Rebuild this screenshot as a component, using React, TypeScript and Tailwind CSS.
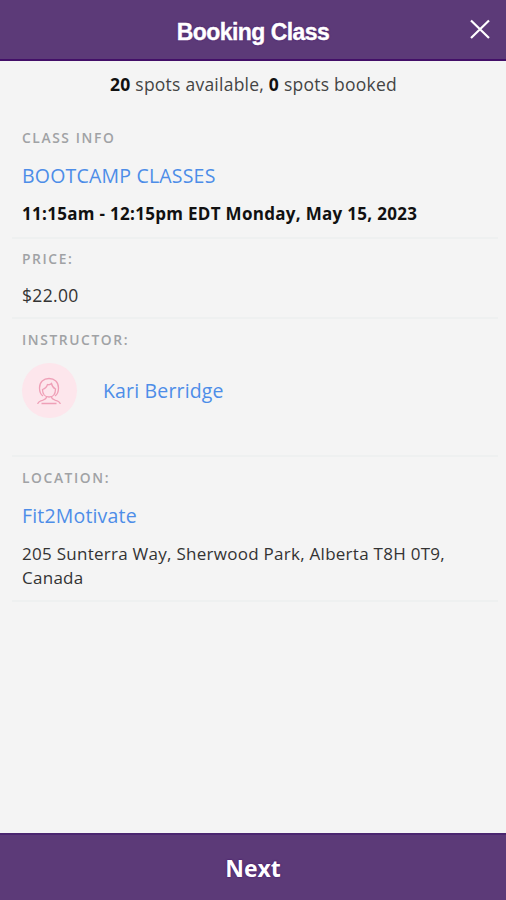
import type { ReactNode } from 'react';

const Label = ({ children }: { children: ReactNode }) => (
  <h2 className="text-[13.8px] font-semibold leading-5 tracking-[1.6px] text-[#a0a2a5]">{children}</h2>
);

const App = () => {
  return (
    <div className="flex flex-col h-[900px] w-[506px] bg-[#f4f4f4] text-[#333] font-['Open_Sans',sans-serif]">
      <header className="relative flex h-[61px] shrink-0 items-center justify-center border-b-2 border-[#430f68] bg-[#5c3a78] pt-[6px] text-white">
        <h1 className="text-[23px] font-bold tracking-[-0.54px] font-['Liberation_Sans',sans-serif] [-webkit-text-stroke:0.4px_white] [text-shadow:0_0_2px_#3d0867]">
          Booking Class
        </h1>
        <button aria-label="Close" className="absolute right-4 top-[19px]">
          <svg width="20" height="20" viewBox="0 0 20 20" fill="none" stroke="currentColor" strokeWidth="2.2">
            <path d="M1 1.5l18 17.5M19 1.5L1 19" />
          </svg>
        </button>
      </header>
      <main className="flex-1 pl-3 pr-2">
        <p className="pt-[11px] pr-[3px] text-center text-[17.5px] leading-6 tracking-[0.24px] text-[#444]">
          <b className="text-[#111]">20</b> spots available, <b className="text-[#111]">0</b> spots booked
        </p>
        <section className="h-[143px] border-b-2 border-[#eef0f0] px-[10px] pt-[32px]">
          <Label>CLASS INFO</Label>
          <a className="mt-[14px] block text-[19.5px] leading-7 tracking-[0.2px] text-[#4d8de8]">BOOTCAMP CLASSES</a>
          <p className="mt-3 text-[17px] font-bold leading-6 tracking-[0.3px] text-[#111]">
            11:15am - 12:15pm EDT Monday, May 15, 2023
          </p>
        </section>
        <section className="h-[80px] border-b-2 border-[#eef0f0] px-[10px] pt-[10px]">
          <Label>PRICE:</Label>
          <p className="mt-[14px] text-[17.5px] leading-6 tracking-[0.35px]">$22.00</p>
        </section>
        <section className="h-[138px] border-b-2 border-[#eef0f0] px-[10px] pt-[11px]">
          <Label>INSTRUCTOR:</Label>
          <div className="mt-[13px] flex items-center gap-[26px]">
            <div className="flex size-[55px] items-center justify-center rounded-full bg-[#fde6ec] pr-[2px]">
              <svg width="24" height="28" viewBox="0 0 24 28" fill="none" stroke="#efa0b7" strokeWidth="1.3">
                <path d="M6 19C3 17 2.500 14 2.500 11 2.500 5 6.500 1.500 12 1.500S21.500 5 21.500 11c0 3-.5 6-3.500 8" />
                <path d="M5.500 12.500c3-1 4.500-3 5-5 1.500.5 3 0 4-1 .5 2.500 2 4.500 4 5.500C18.500 17 16 20 12 20s-6.500-3-6.500-7.500z" />
                <path d="M9.500 19.800c0 1.700-1.500 2.700-4 3.500C3 24 1 25 .7 27M14.500 19.800c0 1.700 1.500 2.700 4 3.500 2.500.7 4.500 1.700 4.800 3.700M4.500 26.500h15" />
              </svg>
            </div>
            <a className="text-[19.5px] tracking-[0.16px] text-[#4d8de8]">Kari Berridge</a>
          </div>
        </section>
        <section className="h-[145px] border-b-2 border-[#eef0f0] px-[10px] pt-[11px]">
          <Label>LOCATION:</Label>
          <a className="mt-[14px] block text-[19.5px] leading-7 tracking-[0.17px] text-[#4d8de8]">Fit2Motivate</a>
          <p className="mt-3 text-[17px] leading-6 tracking-[0.27px]">
            205 Sunterra Way, Sherwood Park, Alberta T8H 0T9, Canada
          </p>
        </section>
      </main>
      <button className="h-[67px] shrink-0 border-t-2 border-[#4b2670] bg-[#5c3a78] pt-[2px] text-[23px] font-bold text-white [text-shadow:0_0_2px_#3d0867]">
        Next
      </button>
    </div>
  );
};

export default App;
